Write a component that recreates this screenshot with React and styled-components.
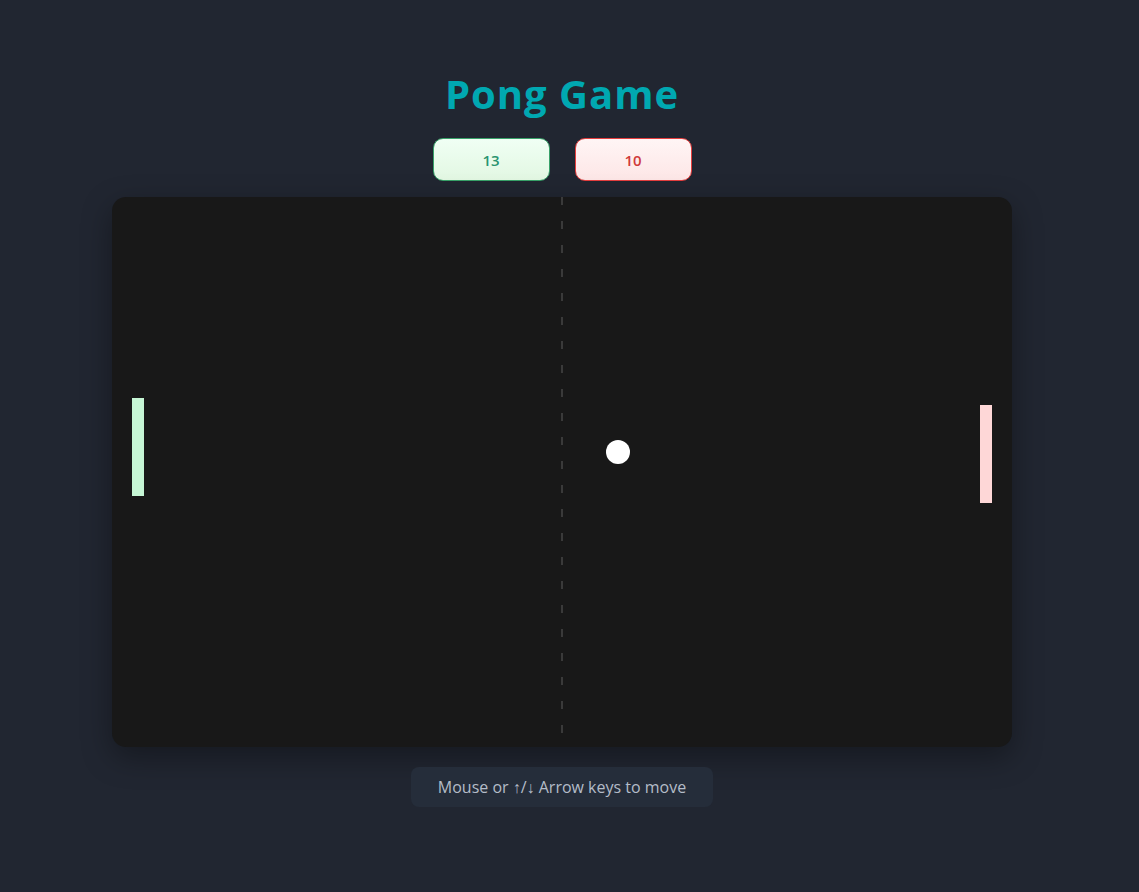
import React from 'react';
import styled, { createGlobalStyle } from 'styled-components';

const GlobalStyle = createGlobalStyle`
  html, body {
    margin: 0;
    padding: 0;
    background: #212631;
    font-family: "Open Sans", "Noto Sans", sans-serif;
  }
`;

const Page = styled.div`
  min-height: 892px;
  display: flex;
  flex-direction: column;
  align-items: center;
  padding: 70px 15px 0 0;
  box-sizing: border-box;
`;

const Title = styled.h1`
  margin: 0;
  font-size: 40px;
  font-weight: 700;
  letter-spacing: 1px;
  color: #00a8b1;
  line-height: 48px;
`;

const Scores = styled.div`
  display: flex;
  gap: 25px;
  margin-top: 20px;
`;

const Score = styled.div`
  width: 117px;
  height: 43px;
  box-sizing: border-box;
  border-radius: 10px;
  display: flex;
  align-items: center;
  justify-content: center;
  font-size: 15px;
  font-weight: 600;
  border: 1px solid ${(p) => (p.$side === 'left' ? '#38a169' : '#e53e3e')};
  color: ${(p) => (p.$side === 'left' ? '#2a9470' : '#d03a3a')};
  background: ${(p) =>
    p.$side === 'left'
      ? 'linear-gradient(180deg, #f0fff4 0%, #e2f7e2 100%)'
      : 'linear-gradient(180deg, #fff5f5 0%, #fde6e6 100%)'};
`;

const Board = styled.div`
  margin-top: 16px;
  width: 900px;
  height: 550px;
  border-radius: 14px;
  background: #181818;
  overflow: hidden;
  box-shadow: 0 10px 30px rgba(0, 0, 0, 0.35);
  svg {
    display: block;
  }
`;

const Hint = styled.div`
  margin-top: 20px;
  padding: 0 27px;
  height: 40px;
  display: flex;
  align-items: center;
  border-radius: 8px;
  background: #252d3a;
  color: #b4bcc8;
  font-size: 16px;
`;

const App = () => (
  <Page>
    <GlobalStyle />
    <Title>Pong Game</Title>
    <Scores>
      <Score $side="left">13</Score>
      <Score $side="right">10</Score>
    </Scores>
    <Board>
      <svg width="900" height="550" viewBox="0 0 900 550">
        <line x1="450" y1="0" x2="450" y2="550" stroke="#3a3a3a" strokeWidth="2" strokeDasharray="8 16" />
        <rect x="20" y="201" width="12" height="98" fill="#c6f6d5" />
        <rect x="868" y="208" width="12" height="98" fill="#fed7d7" />
        <circle cx="506" cy="255" r="12" fill="#ffffff" />
      </svg>
    </Board>
    <Hint>Mouse or ↑/↓ Arrow keys to move</Hint>
  </Page>
);

export default App;
